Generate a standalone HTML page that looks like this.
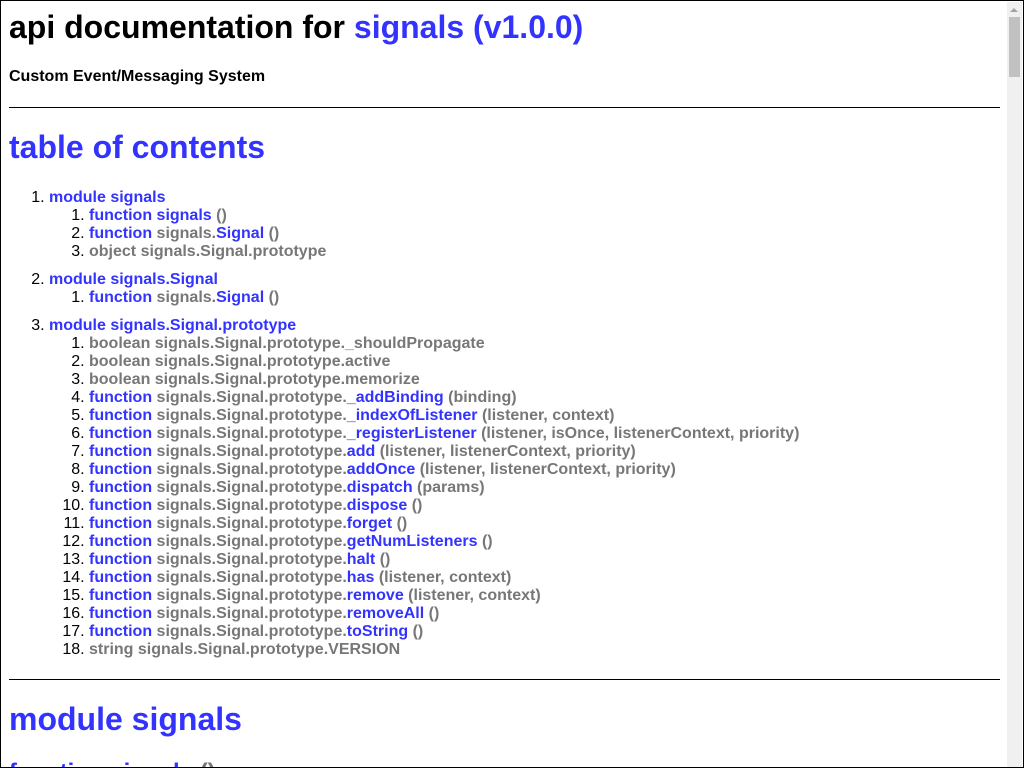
<!DOCTYPE html>
<html><head><meta charset="utf-8"><style>
html,body{margin:0;padding:0;background:#fff;overflow:hidden}
body{font-family:"Liberation Sans",sans-serif;width:1024px;height:768px;position:relative}
.frame{position:absolute;left:0;top:0;width:1022px;height:766px;border:1px solid #000;overflow:hidden}
.wrap{padding:8px 23px 0 8px}
h1{font-size:32px;margin:0 0 22px;line-height:37px;font-weight:bold}
h1.m{margin:21px 0}
h1.t2{margin:21px 0 23px}
h4{font-size:16px;margin:0 0 21px;line-height:18px}
hr{border:0;border-top:1px solid #000;margin:0;height:0}
a,.b{color:#3333ff;text-decoration:none}
ol{margin:0;padding-left:40px;line-height:18px}
ol.top{margin:0 0 20px}
ol.top>li{margin-bottom:10px}
ol.top>li:last-child{margin-bottom:0}
li{font-weight:normal;color:#000}
li span.t{font-weight:bold;color:#777}
.g{color:#777}
.sb{position:absolute;right:1px;top:1px;width:15px;height:766px;background:#f0f0f0}
.th{position:absolute;left:2px;top:15px;width:11px;height:60px;background:#c1c1c1}
.ar{position:absolute;left:3px;top:6px;width:0;height:0;border-left:4px solid transparent;border-right:4px solid transparent;border-bottom:4px solid #a3a3a3}
h2{font-size:24px;margin:0;color:#3333ff}
</style></head><body><div class="frame"><div class="wrap">
<h1>api documentation for <a>signals (v1.0.0)</a></h1>
<h4>Custom Event/Messaging System</h4>
<hr>
<h1 class="t2"><a>table of contents</a></h1>
<ol class="top">
<li><span class="t"><a>module signals</a></span>
<ol>
<li><span class="t"><a>function signals</a> ()</span></li>
<li><span class="t"><a>function</a> signals.<a>Signal</a> ()</span></li>
<li><span class="t">object signals.Signal.prototype</span></li>
</ol></li>
<li><span class="t"><a>module signals.Signal</a></span>
<ol><li><span class="t"><a>function</a> signals.<a>Signal</a> ()</span></li></ol></li>
<li><span class="t"><a>module signals.Signal.prototype</a></span>
<ol>
<li><span class="t">boolean signals.Signal.prototype._shouldPropagate</span></li>
<li><span class="t">boolean signals.Signal.prototype.active</span></li>
<li><span class="t">boolean signals.Signal.prototype.memorize</span></li>
<li><span class="t"><a>function</a> signals.Signal.prototype.<a>_addBinding</a> (binding)</span></li>
<li><span class="t"><a>function</a> signals.Signal.prototype.<a>_indexOfListener</a> (listener, context)</span></li>
<li><span class="t"><a>function</a> signals.Signal.prototype.<a>_registerListener</a> (listener, isOnce, listenerContext, priority)</span></li>
<li><span class="t"><a>function</a> signals.Signal.prototype.<a>add</a> (listener, listenerContext, priority)</span></li>
<li><span class="t"><a>function</a> signals.Signal.prototype.<a>addOnce</a> (listener, listenerContext, priority)</span></li>
<li><span class="t"><a>function</a> signals.Signal.prototype.<a>dispatch</a> (params)</span></li>
<li><span class="t"><a>function</a> signals.Signal.prototype.<a>dispose</a> ()</span></li>
<li><span class="t"><a>function</a> signals.Signal.prototype.<a>forget</a> ()</span></li>
<li><span class="t"><a>function</a> signals.Signal.prototype.<a>getNumListeners</a> ()</span></li>
<li><span class="t"><a>function</a> signals.Signal.prototype.<a>halt</a> ()</span></li>
<li><span class="t"><a>function</a> signals.Signal.prototype.<a>has</a> (listener, context)</span></li>
<li><span class="t"><a>function</a> signals.Signal.prototype.<a>remove</a> (listener, context)</span></li>
<li><span class="t"><a>function</a> signals.Signal.prototype.<a>removeAll</a> ()</span></li>
<li><span class="t"><a>function</a> signals.Signal.prototype.<a>toString</a> ()</span></li>
<li><span class="t">string signals.Signal.prototype.VERSION</span></li>
</ol></li>
</ol>
<hr>
<h1 class="m"><a>module signals</a></h1>
<h2 style="margin-top:1px">function signals <span class="g">()</span></h2>
</div>
<div class="sb"><div class="ar"></div><div class="th"></div></div>
</div></body></html>
